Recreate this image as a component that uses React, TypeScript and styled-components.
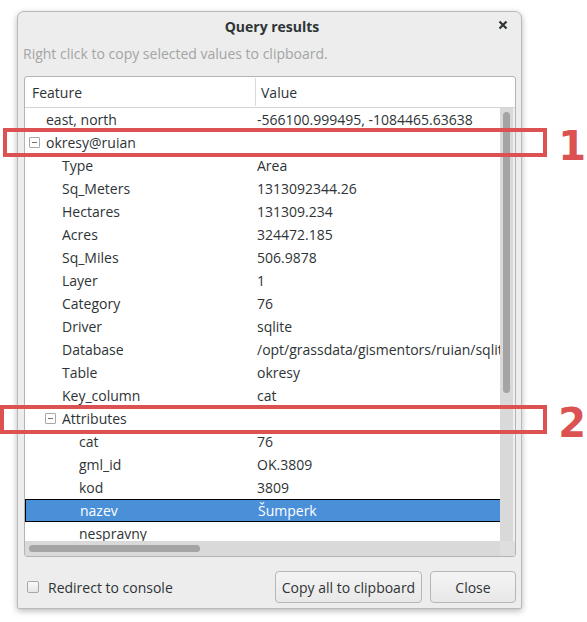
import React from 'react';
import styled, { createGlobalStyle } from 'styled-components';

const GlobalStyle = createGlobalStyle`
  html, body {
    margin: 0;
    padding: 0;
    background: #ffffff;
  }
  body {
    font-family: 'Open Sans', 'DejaVu Sans', sans-serif;
    color: #2e3436;
  }
`;

type Row = {
  level: number;
  name: string;
  value?: string;
  expander?: boolean;
  selected?: boolean;
};

const rows: Row[] = [
  { level: 0, name: 'east, north', value: '-566100.999495, -1084465.63638' },
  { level: 0, name: 'okresy@ruian', expander: true },
  { level: 1, name: 'Type', value: 'Area' },
  { level: 1, name: 'Sq_Meters', value: '1313092344.26' },
  { level: 1, name: 'Hectares', value: '131309.234' },
  { level: 1, name: 'Acres', value: '324472.185' },
  { level: 1, name: 'Sq_Miles', value: '506.9878' },
  { level: 1, name: 'Layer', value: '1' },
  { level: 1, name: 'Category', value: '76' },
  { level: 1, name: 'Driver', value: 'sqlite' },
  { level: 1, name: 'Database', value: '/opt/grassdata/gismentors/ruian/sqlite/sqlite.db' },
  { level: 1, name: 'Table', value: 'okresy' },
  { level: 1, name: 'Key_column', value: 'cat' },
  { level: 1, name: 'Attributes', expander: true },
  { level: 2, name: 'cat', value: '76' },
  { level: 2, name: 'gml_id', value: 'OK.3809' },
  { level: 2, name: 'kod', value: '3809' },
  { level: 2, name: 'nazev', value: 'Šumperk', selected: true },
  { level: 2, name: 'nespravny', value: '' },
];

const indents = [21, 37, 54];

const App: React.FC = () => {
  return (
    <Page>
      <GlobalStyle />
      <Window>
        <TitleBar>
          <Title>Query results</Title>
          <CloseButton>
            <svg width="10" height="10" viewBox="0 0 10 10">
              <path d="M1.5 1.5 L8.5 8.5 M8.5 1.5 L1.5 8.5" stroke="#2e3436" strokeWidth="2.2" strokeLinecap="butt" />
            </svg>
          </CloseButton>
        </TitleBar>
        <Hint>Right click to copy selected values to clipboard.</Hint>
        <TreeFrame>
          <Header>
            <HeaderCell>Feature</HeaderCell>
            <HeaderCell divider>Value</HeaderCell>
          </Header>
          <Body>
            <Content>
              {rows.map((r) => (
                <TreeRow key={r.name + r.level} selected={r.selected}>
                  <NameCell style={{ paddingLeft: indents[r.level] }}>
                    {r.expander && <Expander />}
                    {r.name}
                  </NameCell>
                  <ValueCell>{r.value}</ValueCell>
                </TreeRow>
              ))}
            </Content>
            <VTrack>
              <VThumb />
            </VTrack>
            <HTrack>
              <HThumb />
            </HTrack>
            <Corner />
          </Body>
        </TreeFrame>
        <Footer>
          <CheckLabel>
            <CheckBox />
            Redirect to console
          </CheckLabel>
          <Buttons>
            <Button width={147}>Copy all to clipboard</Button>
            <Button width={86}>Close</Button>
          </Buttons>
        </Footer>
      </Window>
      <Mark top={128} left={3}>
        <Number>1</Number>
      </Mark>
      <Mark top={405} left={0}>
        <Number>2</Number>
      </Mark>
    </Page>
  );
};

export default App;

const Page = styled.div`
  position: relative;
  width: 587px;
  height: 622px;
  padding: 11px 0 0 17px;
  box-sizing: border-box;
  overflow: hidden;
`;

const Window = styled.div`
  box-sizing: border-box;
  width: 505px;
  height: 598px;
  display: flex;
  flex-direction: column;
  background: #ededed;
  border: 1px solid #b9b9b9;
  border-radius: 7px 7px 2px 2px;
  box-shadow: 0 2px 6px rgba(0, 0, 0, 0.28);
  padding: 0 5px 0 6px;
`;

const TitleBar = styled.div`
  position: relative;
  height: 26px;
  padding-top: 1px;
  display: flex;
  align-items: center;
  justify-content: center;
`;

const Title = styled.span`
  font-size: 14px;
  font-weight: bold;
  color: #2e3436;
  margin-left: 4px;
`;

const CloseButton = styled.div`
  position: absolute;
  right: 8px;
  top: 8px;
  display: flex;
`;

const Hint = styled.div`
  height: 20px;
  line-height: 20px;
  margin: 5px 0 12px -1px;
  font-size: 14px;
  color: #a2a5a5;
`;

const TreeFrame = styled.div`
  box-sizing: border-box;
  height: 481px;
  display: flex;
  flex-direction: column;
  background: #ffffff;
  border: 1px solid #b4b4b4;
  border-radius: 3px;
  overflow: hidden;
`;

const Header = styled.div`
  display: grid;
  grid-template-columns: 230px 1fr;
  height: 30px;
  border-bottom: 1px solid #d6d6d6;
`;

const HeaderCell = styled.div<{ divider?: boolean }>`
  display: flex;
  align-items: center;
  padding-left: ${(p) => (p.divider ? 5 : 7)}px;
  font-size: 14px;
  color: #2e3436;
  border-left: ${(p) => (p.divider ? '1px solid #dadada' : 'none')};
  margin: 1px 0;
`;

const Body = styled.div`
  display: grid;
  grid-template-columns: 475px 15px;
  grid-template-rows: 433px 15px;
`;

const Content = styled.div`
  overflow: hidden;
`;

const TreeRow = styled.div<{ selected?: boolean }>`
  box-sizing: border-box;
  display: grid;
  grid-template-columns: 232px 1fr;
  height: 23px;
  align-items: center;
  font-size: 14px;
  white-space: nowrap;
  background: ${(p) => (p.selected ? '#4a90d9' : 'transparent')};
  color: ${(p) => (p.selected ? '#ffffff' : '#2e3436')};
  border-style: solid;
  border-color: ${(p) => (p.selected ? '#000000' : 'transparent')};
  border-width: ${(p) => (p.selected ? '1px 0 1px 1px' : '0')};
`;

const NameCell = styled.div`
  display: flex;
  align-items: center;
`;

const Expander = styled.span`
  position: relative;
  flex: none;
  width: 9px;
  height: 9px;
  margin: 0 6px 0 -17px;
  border: 1px solid #a7a9a9;
  border-radius: 1px;
  &::after {
    content: '';
    position: absolute;
    left: 2px;
    right: 2px;
    top: 4px;
    height: 1px;
    background: #6d7272;
  }
`;

const ValueCell = styled.div`
  overflow: hidden;
`;

const VTrack = styled.div`
  background: #d9d9d9;
  border-right: 2px solid #efefef;
  padding: 4px 3px 0 3px;
`;

const VThumb = styled.div`
  width: 7px;
  height: 281px;
  border-radius: 4px;
  background: #a4a4a4;
`;

const HTrack = styled.div`
  background: #d9d9d9;
  padding: 4px 0 0 4px;
`;

const HThumb = styled.div`
  width: 171px;
  height: 7px;
  border-radius: 4px;
  background: #a4a4a4;
`;

const Corner = styled.div`
  background: #dedede;
`;

const Footer = styled.div`
  flex: 1;
  display: flex;
  align-items: flex-end;
  justify-content: space-between;
  padding-bottom: 5px;
`;

const CheckLabel = styled.div`
  display: flex;
  align-items: center;
  gap: 9px;
  height: 32px;
  font-size: 14px;
  color: #2e3436;
  margin-left: 3px;
`;

const CheckBox = styled.span`
  box-sizing: border-box;
  width: 12px;
  height: 12px;
  border: 1px solid #a8a8a8;
  border-radius: 2px;
  background: linear-gradient(#fafafa, #e6e6e6);
`;

const Buttons = styled.div`
  display: flex;
  gap: 8px;
`;

const Button = styled.button<{ width: number }>`
  box-sizing: border-box;
  width: ${(p) => p.width}px;
  height: 32px;
  border: 1px solid #b6b6b3;
  border-radius: 4px;
  background: linear-gradient(#f4f4f4, #e8e8e8);
  font-family: 'Open Sans', 'DejaVu Sans', sans-serif;
  font-size: 14px;
  color: #2e3436;
  padding: 0;
`;

const Mark = styled.div<{ top: number; left: number }>`
  position: absolute;
  top: ${(p) => p.top}px;
  left: ${(p) => p.left}px;
  width: ${(p) => 547 - p.left}px;
  height: 29px;
  box-sizing: border-box;
  border: 4px solid #dc5252;
`;

const Number = styled.span`
  position: absolute;
  right: -43px;
  top: -4px;
  font-family: 'DejaVu Sans', sans-serif;
  font-weight: bold;
  font-size: 40px;
  line-height: 36px;
  color: #dc5252;
`;
